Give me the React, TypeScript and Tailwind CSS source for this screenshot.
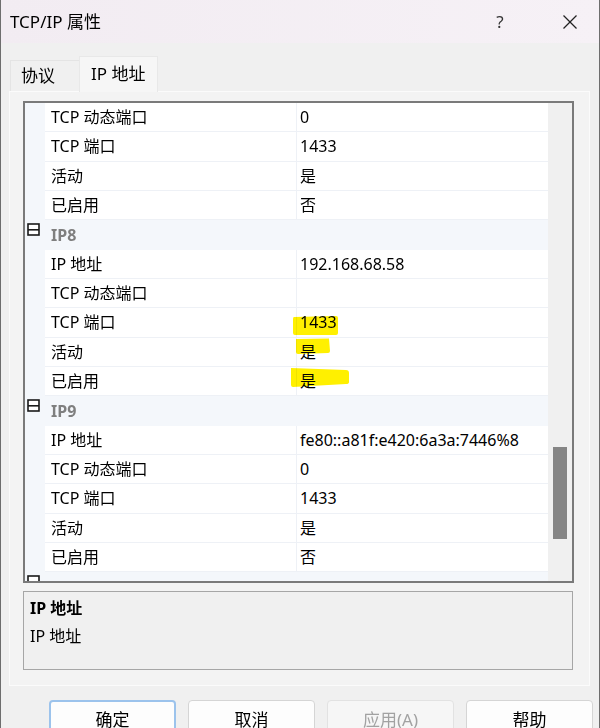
import React from "react";

type Row =
  | { kind: "cat"; label: string }
  | { kind: "prop"; name: string; value: string; hl?: 1 | 2 | 3 };

const rows: Row[] = [
  { kind: "prop", name: "TCP 动态端口", value: "0" },
  { kind: "prop", name: "TCP 端口", value: "1433" },
  { kind: "prop", name: "活动", value: "是" },
  { kind: "prop", name: "已启用", value: "否" },
  { kind: "cat", label: "IP8" },
  { kind: "prop", name: "IP 地址", value: "192.168.68.58" },
  { kind: "prop", name: "TCP 动态端口", value: "" },
  { kind: "prop", name: "TCP 端口", value: "1433", hl: 1 },
  { kind: "prop", name: "活动", value: "是", hl: 2 },
  { kind: "prop", name: "已启用", value: "是", hl: 3 },
  { kind: "cat", label: "IP9" },
  { kind: "prop", name: "IP 地址", value: "fe80::a81f:e420:6a3a:7446%8" },
  { kind: "prop", name: "TCP 动态端口", value: "0" },
  { kind: "prop", name: "TCP 端口", value: "1433" },
  { kind: "prop", name: "活动", value: "是" },
  { kind: "prop", name: "已启用", value: "否" },
  { kind: "cat", label: "IP10" },
];

function MinusBox() {
  return (
    <svg width="13" height="13" viewBox="0 0 13 13">
      <rect x="1" y="1" width="11" height="11" fill="#ffffff" stroke="#1a1a1a" strokeWidth="1.6" />
      <line x1="1" y1="6.8" x2="12" y2="6.8" stroke="#1a1a1a" strokeWidth="1.6" />
    </svg>
  );
}

function Highlight({ n }: { n: 1 | 2 | 3 }) {
  if (n === 1)
    return (
      <svg className="absolute left-[-5px] top-[7px] pointer-events-none mix-blend-multiply" width="47" height="21" viewBox="0 0 47 21">
        <path d="M2 2 L44 1 Q46 1 46 3 L46 18 Q46 20 44 20 L3 20 Q1 20 1 18 L1 4 Q1 2 2 2 Z" fill="#fff000" />
      </svg>
    );
  if (n === 2)
    return (
      <svg className="absolute left-[-2px] top-[0px] pointer-events-none mix-blend-multiply" width="36" height="17" viewBox="0 0 36 17">
        <path d="M1 1 L34 0.5 L35 13 Q35 15 33 15 L3 16 Q1 16 1 14 Z" fill="#fff000" />
      </svg>
    );
  return (
    <svg className="absolute left-[-7px] top-[0px] pointer-events-none mix-blend-multiply" width="60" height="21" viewBox="0 0 60 21">
      <path d="M1 1 L56 3 Q59 3 59 6 L59 15 Q59 17 56 17 L3 20 Q1 20 1 18 Z" fill="#fff000" />
    </svg>
  );
}

function GridRow({ row }: { row: Row }) {
  if (row.kind === "cat") {
    return (
      <div className="flex h-[29.33px] shrink-0 bg-[#f4f7fb]">
        <div className="w-[20px] pl-[2px] pt-[3px]">
          <MinusBox />
        </div>
        <div className="flex items-center pl-[6px] text-[16px] font-bold text-[#7f7f7f]">{row.label}</div>
      </div>
    );
  }
  return (
    <div className="flex h-[29.33px] shrink-0">
      <div className="w-[20px] shrink-0 bg-[#f4f7fb]" />
      <div className="flex w-[251px] shrink-0 items-center border-b border-[#eef1f6] bg-white pl-[6px] text-[16px] text-black">
        {row.name}
      </div>
      <div className="relative flex flex-1 items-center border-b border-l border-[#eef1f6] bg-white pl-[3px] text-[16px] text-black">
        <span>{row.value}</span>
        {row.hl ? <Highlight n={row.hl} /> : null}
      </div>
    </div>
  );
}

export default function App() {
  return (
    <div className="flex h-[728px] w-[600px] flex-col overflow-hidden border-x border-[#6e6e6e] bg-[#f0f0f0] font-['Noto_Sans','Noto_Sans_CJK_SC',sans-serif] text-black">
      {/* Title bar */}
      <div className="flex h-[43px] shrink-0 items-center bg-gradient-to-r from-[#f2ecf2] to-[#f6f1f6] pl-[9px]">
        <span className="text-[17px] leading-none">TCP/IP 属性</span>
        <div className="flex-1" />
        <div className="flex w-[46px] items-center justify-center text-[17px] text-[#333]">?</div>
        <div className="w-[24px]" />
        <div className="mr-[6px] flex w-[46px] items-center justify-center">
          <svg width="16" height="16" viewBox="0 0 16 16">
            <line x1="1.5" y1="1.5" x2="14.5" y2="14.5" stroke="#222" strokeWidth="1.3" />
            <line x1="14.5" y1="1.5" x2="1.5" y2="14.5" stroke="#222" strokeWidth="1.3" />
          </svg>
        </div>
      </div>

      {/* Tabs */}
      <div className="flex h-[48px] shrink-0 items-end pl-[9px]">
        <div className="flex h-[31px] w-[69px] items-center border-l border-t border-[#e4e4e4] pl-[10px] text-[17px]">
          协议
        </div>
        <div className="relative top-[1px] flex h-[36px] w-[79px] items-center border-x border-t border-[#e8e8e8] bg-[#f6f6f6] pb-[2px] pl-[11px] text-[17px]">
          IP 地址
        </div>
      </div>

      {/* Tab page */}
      <div className="ml-[8px] flex h-[595px] w-[581px] shrink-0 flex-col border border-[#fbfbfb] bg-[#f3f3f3] pl-[13px] pt-[9px]">
        <div className="flex h-[482px] w-[551px] shrink-0 overflow-hidden border-2 border-[#7a7a7a] bg-white">
          <div className="flex flex-1 flex-col overflow-hidden">
            {rows.map((r, i) => (
              <GridRow key={i} row={r} />
            ))}
          </div>
          <div className="w-[24px] shrink-0 bg-[#f0f0f0] pl-[5px] pt-[344px]">
            <div className="h-[92px] w-[14px] bg-[#858585]" />
          </div>
        </div>
        <div className="mt-[8px] flex h-[79px] w-[550px] shrink-0 flex-col border border-[#a6a6a6] bg-[#f0f0f0] pl-[6px] pt-[3px]">
          <div className="text-[16px] font-bold leading-[26px]">IP 地址</div>
          <div className="text-[16px] leading-[30px]">IP 地址</div>
        </div>
      </div>

      {/* Buttons */}
      <div className="mt-[14px] flex shrink-0 justify-end gap-[12px] pr-[6px]">
        <div className="flex h-[40px] w-[127px] items-center justify-center rounded-[4px] border-2 border-[#9cc3ec] bg-[#fdfdfd] text-[17px]">
          确定
        </div>
        <div className="flex h-[40px] w-[127px] items-center justify-center rounded-[4px] border border-[#d5d5d5] bg-[#fdfdfd] text-[17px]">
          取消
        </div>
        <div className="flex h-[40px] w-[127px] items-center justify-center rounded-[4px] border border-[#e2e2e2] bg-[#f6f6f6] text-[17px] text-[#a2a2a2]">
          应用(A)
        </div>
        <div className="flex h-[40px] w-[127px] items-center justify-center rounded-[4px] border border-[#d5d5d5] bg-[#fdfdfd] text-[17px]">
          帮助
        </div>
      </div>
    </div>
  );
}
